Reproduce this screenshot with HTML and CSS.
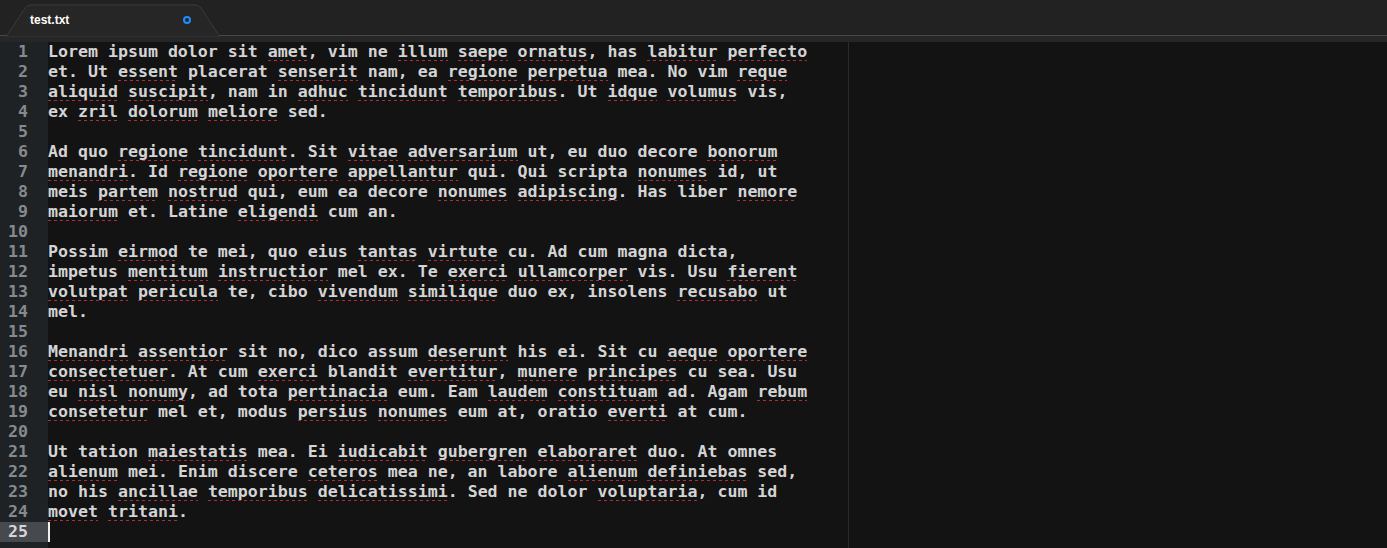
FILE: index.html
```html
<!DOCTYPE html>
<html>
<head>
<meta charset="utf-8">
<link rel="stylesheet" href="styles.css">
</head>
<body>
<div class="window">
  <div class="tabbar">
    <div class="tab">
      <svg class="tab-shape" width="216" height="37" viewBox="0 0 216 37"><path d="M1 37 L20 8 Q22 5 26 5 L190 5 Q194 5 196 8 L215 37 Z" fill="#262626" stroke="#3a3a3a" stroke-width="1"/></svg>
      <span class="tab-title">test.txt</span>
      <span class="tab-dot"></span>
    </div>
  </div>
  <div class="strip"></div>
  <div class="editor">
    <div class="gutter">
      <div class="ln">1</div><div class="ln">2</div><div class="ln">3</div><div class="ln">4</div><div class="ln">5</div>
      <div class="ln">6</div><div class="ln">7</div><div class="ln">8</div><div class="ln">9</div><div class="ln">10</div>
      <div class="ln">11</div><div class="ln">12</div><div class="ln">13</div><div class="ln">14</div><div class="ln">15</div>
      <div class="ln">16</div><div class="ln">17</div><div class="ln">18</div><div class="ln">19</div><div class="ln">20</div>
      <div class="ln">21</div><div class="ln">22</div><div class="ln">23</div><div class="ln">24</div><div class="ln active">25</div>
    </div>
    <div class="code">
      <div class="line">Lorem ipsum dolor sit <span class="sp">amet</span>, vim ne <span class="sp">illum</span> <span class="sp">saepe</span> <span class="sp">ornatus</span>, has <span class="sp">labitur</span> <span class="sp">perfecto</span></div>
      <div class="line">et. Ut <span class="sp">essent</span> placerat <span class="sp">senserit</span> nam, ea <span class="sp">regione</span> <span class="sp">perpetua</span> mea. No vim <span class="sp">reque</span></div>
      <div class="line"><span class="sp">aliquid</span> <span class="sp">suscipit</span>, nam in <span class="sp">adhuc</span> <span class="sp">tincidunt</span> <span class="sp">temporibus</span>. Ut <span class="sp">idque</span> <span class="sp">volumus</span> vis,</div>
      <div class="line">ex <span class="sp">zril</span> <span class="sp">dolorum</span> <span class="sp">meliore</span> sed.</div>
      <div class="line"></div>
      <div class="line">Ad quo <span class="sp">regione</span> <span class="sp">tincidunt</span>. Sit <span class="sp">vitae</span> <span class="sp">adversarium</span> ut, eu duo decore <span class="sp">bonorum</span></div>
      <div class="line"><span class="sp">menandri</span>. Id <span class="sp">regione</span> <span class="sp">oportere</span> <span class="sp">appellantur</span> qui. Qui scripta <span class="sp">nonumes</span> id, ut</div>
      <div class="line">meis <span class="sp">partem</span> <span class="sp">nostrud</span> qui, eum ea decore <span class="sp">nonumes</span> <span class="sp">adipiscing</span>. Has liber <span class="sp">nemore</span></div>
      <div class="line"><span class="sp">maiorum</span> et. Latine <span class="sp">eligendi</span> cum an.</div>
      <div class="line"></div>
      <div class="line">Possim <span class="sp">eirmod</span> te mei, quo eius <span class="sp">tantas</span> <span class="sp">virtute</span> cu. Ad cum magna dicta,</div>
      <div class="line">impetus <span class="sp">mentitum</span> <span class="sp">instructior</span> mel ex. Te <span class="sp">exerci</span> <span class="sp">ullamcorper</span> vis. Usu <span class="sp">fierent</span></div>
      <div class="line"><span class="sp">volutpat</span> <span class="sp">pericula</span> te, cibo <span class="sp">vivendum</span> <span class="sp">similique</span> duo ex, insolens <span class="sp">recusabo</span> ut</div>
      <div class="line">mel.</div>
      <div class="line"></div>
      <div class="line"><span class="sp">Menandri</span> <span class="sp">assentior</span> sit no, dico assum <span class="sp">deserunt</span> his ei. Sit cu <span class="sp">aeque</span> <span class="sp">oportere</span></div>
      <div class="line"><span class="sp">consectetuer</span>. At cum <span class="sp">exerci</span> blandit <span class="sp">evertitur</span>, <span class="sp">munere</span> <span class="sp">principes</span> cu sea. Usu</div>
      <div class="line">eu <span class="sp">nisl</span> <span class="sp">nonumy</span>, ad tota <span class="sp">pertinacia</span> eum. Eam <span class="sp">laudem</span> <span class="sp">constituam</span> ad. Agam <span class="sp">rebum</span></div>
      <div class="line"><span class="sp">consetetur</span> mel et, modus <span class="sp">persius</span> <span class="sp">nonumes</span> eum at, oratio <span class="sp">everti</span> at cum.</div>
      <div class="line"></div>
      <div class="line">Ut tation <span class="sp">maiestatis</span> mea. Ei <span class="sp">iudicabit</span> <span class="sp">gubergren</span> <span class="sp">elaboraret</span> duo. At omnes</div>
      <div class="line"><span class="sp">alienum</span> mei. Enim discere <span class="sp">ceteros</span> mea ne, an labore <span class="sp">alienum</span> <span class="sp">definiebas</span> sed,</div>
      <div class="line">no his <span class="sp">ancillae</span> <span class="sp">temporibus</span> <span class="sp">delicatissimi</span>. Sed ne dolor <span class="sp">voluptaria</span>, cum id</div>
      <div class="line"><span class="sp">movet</span> <span class="sp">tritani</span>.</div>
      <div class="line current"><span class="cursor"></span></div>
    </div>
  </div>
</div>
</body>
</html>
```

FILE: styles.css
```css
html, body {
  margin: 0;
  padding: 0;
  background: #131313;
  overflow: hidden;
}

.window {
  width: 1387px;
  height: 548px;
  display: flex;
  flex-direction: column;
  background: #131313;
  overflow: hidden;
}

.tabbar {
  flex: 0 0 auto;
  height: 35px;
  background: #222222;
  border-bottom: 1px solid #484848;
  display: flex;
  align-items: flex-end;
  padding-left: 5px;
  position: relative;
}

.tab {
  position: relative;
  width: 216px;
  height: 31px;
  margin-bottom: -1px;
  display: flex;
  align-items: center;
  padding-left: 25px;
  box-sizing: border-box;
}

.tab-shape {
  position: absolute;
  left: 0;
  top: -5px;
}

.tab-title {
  position: relative;
  font-family: "Liberation Sans", Arial, sans-serif;
  font-weight: bold;
  font-size: 12px;
  color: #ffffff;
  margin-top: -2px;
}

.tab-dot {
  position: absolute;
  left: 178px;
  top: 11px;
  width: 4px;
  height: 4px;
  border: 2px solid #1b8fff;
  border-radius: 50%;
}

.strip {
  flex: 0 0 auto;
  height: 6px;
  background: #262626;
}

.editor {
  flex: 1 1 auto;
  min-height: 0;
  display: flex;
  font-family: "DejaVu Sans Mono", monospace;
  font-size: 16.6px;
  font-weight: bold;
  line-height: 20px;
}

.gutter {
  width: 48px;
  flex: 0 0 48px;
  background: #1e2225;
  color: #858a8f;
  text-align: right;
  box-sizing: border-box;
}

.ln {
  height: 20px;
  padding-right: 20px;
}

.ln.active {
  background: #46494d;
  color: #d6d6d6;
}

.code {
  flex: 1;
  color: #d4d4d4;
  background-image: linear-gradient(#2a2a2a, #2a2a2a);
  background-size: 1px 100%;
  background-position: 800px 0;
  background-repeat: no-repeat;
}

.line {
  height: 20px;
  white-space: pre;
}

.sp {
  background-image: repeating-linear-gradient(90deg, #a83232 0 3px, transparent 3px 6px);
  background-size: 100% 1px;
  background-position: 0 100%;
  background-repeat: no-repeat;
}

.cursor {
  display: inline-block;
  width: 2px;
  height: 20px;
  background: #f0f0f0;
  vertical-align: top;
}
```
